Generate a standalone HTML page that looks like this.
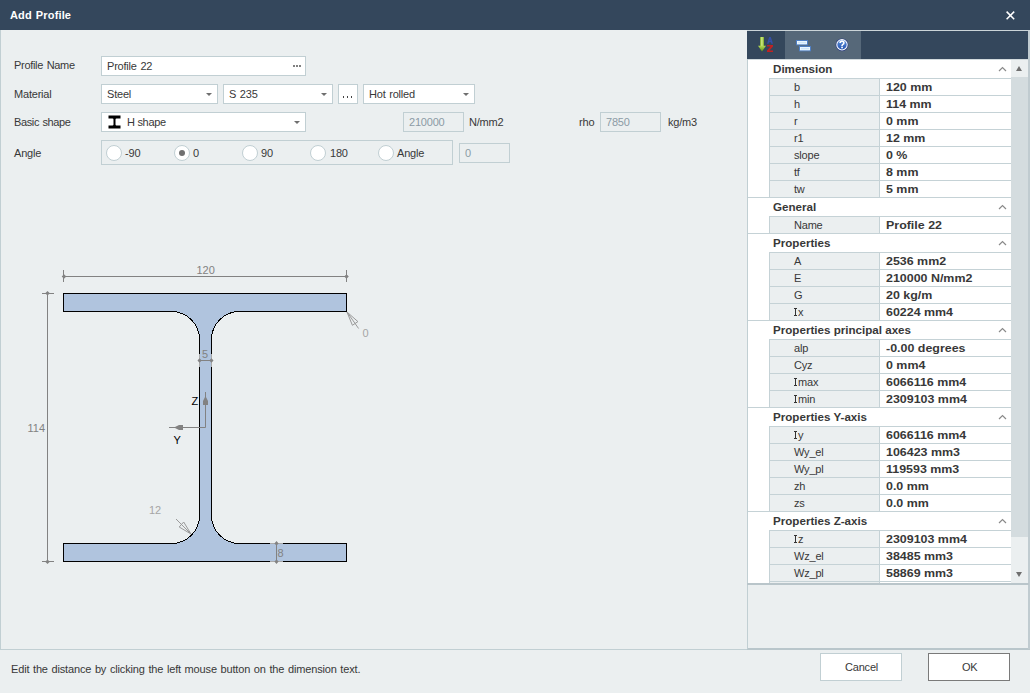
<!DOCTYPE html>
<html><head><meta charset="utf-8">
<style>
*{margin:0;padding:0;box-sizing:border-box}
html,body{width:1030px;height:693px;overflow:hidden;background:#EBEFF0;font-family:"Liberation Sans",sans-serif;font-size:11px;color:#383838;position:relative}
.a{position:absolute}
.t{position:absolute;white-space:nowrap;line-height:13px;letter-spacing:-0.2px;word-spacing:0.8px}
.box{position:absolute;background:#fff;border:1px solid #C1CFD3}
.dis{background:#EBEFF0}
.arr{position:absolute;width:0;height:0;border-left:3.5px solid transparent;border-right:3.5px solid transparent;border-top:3.5px solid #6f6f6f}
.hdr{font-weight:bold;letter-spacing:0;word-spacing:0;transform:scaleX(1.055);transform-origin:0 0}
.val{font-weight:bold;letter-spacing:0;word-spacing:0;transform:scaleX(1.13);transform-origin:0 0}
.I{display:inline-block;width:3px;height:8px;border-top:1px solid #333;border-bottom:1px solid #333;background:linear-gradient(#333,#333) no-repeat 1px 0/1px 100%;margin-right:1px;vertical-align:baseline}
.radio{position:absolute;width:16px;height:16px;border-radius:50%;background:#fff;border:1px solid #C1CFD3}
</style></head><body>
<!-- title bar -->
<div class="a" style="left:0;top:0;width:1030px;height:30px;background:#34475C"></div>
<div class="t" style="left:10px;top:9px;color:#fff;font-weight:bold;letter-spacing:0.15px">Add Profile</div>
<svg class="a" style="left:1004px;top:9px" width="12" height="12" viewBox="0 0 12 12"><path d="M2.6 2.6L10.2 10.2M10.2 2.6L2.6 10.2" stroke="#fff" stroke-width="1.5"/></svg>

<!-- left panel border -->
<div class="a" style="left:0;top:30px;width:1px;height:620px;background:#C1CFD3"></div>
<div class="a" style="left:0;top:649px;width:747px;height:1px;background:#C1CFD3"></div>
<div class="a" style="left:747px;top:648px;width:283px;height:2px;background:#B9C6CB"></div>

<!-- form labels -->
<div class="t" style="left:14px;top:59px;letter-spacing:-0.3px">Profile Name</div>
<div class="t" style="left:14px;top:88px">Material</div>
<div class="t" style="left:14px;top:116px;letter-spacing:-0.38px">Basic shape</div>
<div class="t" style="left:14px;top:147px">Angle</div>

<!-- profile name -->
<div class="box" style="left:101px;top:56px;width:205px;height:20px"></div>
<div class="t" style="left:107px;top:60px">Profile 22</div>
<div class="a" style="left:293px;top:65px;width:2px;height:2px;background:#808080"></div>
<div class="a" style="left:296px;top:65px;width:2px;height:2px;background:#808080"></div>
<div class="a" style="left:299px;top:65px;width:2px;height:2px;background:#808080"></div>

<!-- material -->
<div class="box" style="left:101px;top:84px;width:117px;height:20px"></div>
<div class="t" style="left:107px;top:88px">Steel</div>
<div class="arr" style="left:206px;top:93px"></div>
<div class="box" style="left:223px;top:84px;width:110px;height:20px"></div>
<div class="t" style="left:229px;top:88px">S 235</div>
<div class="arr" style="left:321px;top:93px"></div>
<div class="box" style="left:338px;top:84px;width:20px;height:20px"></div>
<div class="a" style="left:343px;top:96px;width:1px;height:2px;background:#444"></div>
<div class="a" style="left:347px;top:96px;width:1px;height:2px;background:#444"></div>
<div class="a" style="left:351px;top:96px;width:1px;height:2px;background:#444"></div>
<div class="box" style="left:363px;top:84px;width:112px;height:20px"></div>
<div class="t" style="left:369px;top:88px">Hot rolled</div>
<div class="arr" style="left:463px;top:93px"></div>

<!-- basic shape -->
<div class="box" style="left:101px;top:112px;width:205px;height:20px"></div>
<svg class="a" style="left:108px;top:115px" width="13" height="14" viewBox="0 0 13 14"><path d="M0.5 0.5H12.5V3.5H8.5Q7.5 3.5 7.5 4.5V9.5Q7.5 10.5 8.5 10.5H12.5V13.5H0.5V10.5H4.5Q5.5 10.5 5.5 9.5V4.5Q5.5 3.5 4.5 3.5H0.5Z" fill="#000"/></svg>
<div class="t" style="left:127px;top:116px;letter-spacing:-0.3px;word-spacing:0">H shape</div>
<div class="arr" style="left:294px;top:121px"></div>

<!-- E / rho -->
<div class="box dis" style="left:403px;top:112px;width:61px;height:20px"></div>
<div class="t" style="left:409px;top:116px;color:#8C9BA5">210000</div>
<div class="t" style="left:469px;top:116px">N/mm2</div>
<div class="t" style="left:579px;top:116px">rho</div>
<div class="box dis" style="left:600px;top:112px;width:61px;height:20px"></div>
<div class="t" style="left:606px;top:116px;color:#8C9BA5">7850</div>
<div class="t" style="left:668px;top:116px">kg/m3</div>

<!-- angle group -->
<div class="a" style="left:101px;top:140px;width:352px;height:25px;border:1px solid #C1CFD3"></div>
<div class="radio" style="left:106px;top:145px"></div>
<div class="t" style="left:125px;top:147px">-90</div>
<div class="radio" style="left:174px;top:145px"></div>
<div class="a" style="left:179px;top:150px;width:6px;height:6px;border-radius:50%;background:#707070"></div>
<div class="t" style="left:193px;top:147px">0</div>
<div class="radio" style="left:242px;top:145px"></div>
<div class="t" style="left:261px;top:147px">90</div>
<div class="radio" style="left:310px;top:145px"></div>
<div class="t" style="left:330px;top:147px">180</div>
<div class="radio" style="left:378px;top:145px"></div>
<div class="t" style="left:397px;top:147px">Angle</div>
<div class="box dis" style="left:459px;top:143px;width:51px;height:20px"></div>
<div class="t" style="left:465px;top:147px;color:#8C9BA5">0</div>

<!-- DRAWING -->
<svg class="a" style="left:0;top:0" width="745" height="648" viewBox="0 0 745 648">
<path d="M63.5,293.5 H346.5 V311.5 H239.5 A28,28 0 0 0 211.5,339.5 V515.5 A28,28 0 0 0 239.5,543.5 H346.5 V561.5 H63.5 V543.5 H171.5 A28,28 0 0 0 199.5,515.5 V339.5 A28,28 0 0 0 171.5,311.5 H63.5 Z" fill="#B0C4DE" stroke="#000" stroke-width="1" shape-rendering="crispEdges"/>
<path d="M63.5,276.5H346.5 M63.5,270V282 M346.5,270V282 M47.5,293.5V561.5 M42,293.5H54 M42,561.5H54" stroke="#828282" stroke-width="1" fill="none"/>
<path d="M61.7,276.5L64,274.2L66.3,276.5L64,278.8Z M344.2,276.5L346.5,274.2L348.8,276.5L346.5,278.8Z M45.2,293.2L47.5,290.9L49.8,293.2L47.5,295.5Z M45.2,561.8L47.5,559.5L49.8,561.8L47.5,564.0999999999999Z" fill="#828282"/>
<text x="196.5" y="274" font-family="Liberation Sans" font-size="11" fill="#828282">120</text>
<text x="27.5" y="432" font-family="Liberation Sans" font-size="11" fill="#828282">114</text>
<path d="M199.5,360.5H211.5" stroke="#828282" stroke-width="1"/>
<path d="M199.5,354V367 M211.5,354V367" stroke="#A9A9A9" stroke-width="1"/>
<path d="M197.5,360.5L199.5,358.3L201.7,360.5L199.5,362.7Z M213.5,360.5L211.5,358.3L209.3,360.5L211.5,362.7Z" fill="#828282"/>
<text x="202" y="358" font-family="Liberation Sans" font-size="11" fill="#828282">5</text>
<path d="M276.5,543.5V561.5" stroke="#828282" stroke-width="1"/>
<path d="M270,543.5H283 M270,561.5H283" stroke="#A9A9A9" stroke-width="1"/>
<path d="M276.5,541L278.6,543.6L276.5,545.6L274.4,543.6Z M276.5,564L278.6,561.4L276.5,559.4L274.4,561.4Z" fill="#828282"/>
<text x="277.5" y="557" font-family="Liberation Sans" font-size="11" fill="#828282">8</text>
<path d="M176,519L191,534" stroke="#9a9a9a" stroke-width="1"/>
<path d="M191,534L179.2,527L183.7,522Z" fill="none" stroke="#9a9a9a" stroke-width="1"/>
<text x="149" y="514" font-family="Liberation Sans" font-size="11" fill="#A5A5A5">12</text>
<path d="M347,312L358.6,328.5" stroke="#9a9a9a" stroke-width="1"/>
<path d="M347,312L357.9,321.6L352.4,325.3Z" fill="none" stroke="#9a9a9a" stroke-width="1"/>
<text x="362.5" y="337" font-family="Liberation Sans" font-size="11" fill="#A5A5A5">0</text>
<path d="M205.5,392V427.5H169" stroke="#828282" stroke-width="1" fill="none"/>
<path d="M205.5,396L208,401V405H203V401Z M174,427.5L179,425H183V430H179Z" fill="#828282"/>
<text x="191.5" y="405" font-family="Liberation Sans" font-size="11" fill="#000">Z</text>
<text x="173.5" y="444" font-family="Liberation Sans" font-size="11" fill="#000">Y</text>
</svg>

<!-- RIGHT PANEL -->
<div class="a" style="left:747px;top:31px;width:1px;height:618px;background:#C1CFD3"></div>
<div class="a" style="left:747px;top:31px;width:282px;height:28px;background:#34475C"></div>
<div class="a" style="left:785px;top:31px;width:76px;height:28px;background:#566879"></div>
<div class="a" style="left:748px;top:59px;width:263px;height:524px;background:#fff"></div>
<div class="t hdr" style="left:773px;top:63px">Dimension</div>
<svg class="a" style="left:998px;top:66px" width="9" height="6" viewBox="0 0 9 6"><path d="M1 5L4.5 1.5L8 5" fill="none" stroke="#8a8a8a" stroke-width="1.2"/></svg>
<div class="a" style="left:769px;top:78px;width:242px;height:1px;background:#C5D2D6"></div>
<div class="a" style="left:769px;top:79px;width:1px;height:16px;background:#C5D2D6"></div>
<div class="a" style="left:770px;top:79px;width:109px;height:16px;background:#EBEFF0"></div>
<div class="a" style="left:879px;top:79px;width:1px;height:16px;background:#C5D2D6"></div>
<div class="t" style="left:794px;top:81px">b</div>
<div class="t val" style="left:886px;top:81px">120 mm</div>
<div class="a" style="left:769px;top:95px;width:242px;height:1px;background:#C5D2D6"></div>
<div class="a" style="left:769px;top:96px;width:1px;height:16px;background:#C5D2D6"></div>
<div class="a" style="left:770px;top:96px;width:109px;height:16px;background:#EBEFF0"></div>
<div class="a" style="left:879px;top:96px;width:1px;height:16px;background:#C5D2D6"></div>
<div class="t" style="left:794px;top:98px">h</div>
<div class="t val" style="left:886px;top:98px">114 mm</div>
<div class="a" style="left:769px;top:112px;width:242px;height:1px;background:#C5D2D6"></div>
<div class="a" style="left:769px;top:113px;width:1px;height:16px;background:#C5D2D6"></div>
<div class="a" style="left:770px;top:113px;width:109px;height:16px;background:#EBEFF0"></div>
<div class="a" style="left:879px;top:113px;width:1px;height:16px;background:#C5D2D6"></div>
<div class="t" style="left:794px;top:115px">r</div>
<div class="t val" style="left:886px;top:115px">0 mm</div>
<div class="a" style="left:769px;top:129px;width:242px;height:1px;background:#C5D2D6"></div>
<div class="a" style="left:769px;top:130px;width:1px;height:16px;background:#C5D2D6"></div>
<div class="a" style="left:770px;top:130px;width:109px;height:16px;background:#EBEFF0"></div>
<div class="a" style="left:879px;top:130px;width:1px;height:16px;background:#C5D2D6"></div>
<div class="t" style="left:794px;top:132px">r1</div>
<div class="t val" style="left:886px;top:132px">12 mm</div>
<div class="a" style="left:769px;top:146px;width:242px;height:1px;background:#C5D2D6"></div>
<div class="a" style="left:769px;top:147px;width:1px;height:16px;background:#C5D2D6"></div>
<div class="a" style="left:770px;top:147px;width:109px;height:16px;background:#EBEFF0"></div>
<div class="a" style="left:879px;top:147px;width:1px;height:16px;background:#C5D2D6"></div>
<div class="t" style="left:794px;top:149px">slope</div>
<div class="t val" style="left:886px;top:149px">0 %</div>
<div class="a" style="left:769px;top:163px;width:242px;height:1px;background:#C5D2D6"></div>
<div class="a" style="left:769px;top:164px;width:1px;height:16px;background:#C5D2D6"></div>
<div class="a" style="left:770px;top:164px;width:109px;height:16px;background:#EBEFF0"></div>
<div class="a" style="left:879px;top:164px;width:1px;height:16px;background:#C5D2D6"></div>
<div class="t" style="left:794px;top:166px">tf</div>
<div class="t val" style="left:886px;top:166px">8 mm</div>
<div class="a" style="left:769px;top:180px;width:242px;height:1px;background:#C5D2D6"></div>
<div class="a" style="left:769px;top:181px;width:1px;height:16px;background:#C5D2D6"></div>
<div class="a" style="left:770px;top:181px;width:109px;height:16px;background:#EBEFF0"></div>
<div class="a" style="left:879px;top:181px;width:1px;height:16px;background:#C5D2D6"></div>
<div class="t" style="left:794px;top:183px">tw</div>
<div class="t val" style="left:886px;top:183px">5 mm</div>
<div class="a" style="left:748px;top:197px;width:263px;height:1px;background:#C5D2D6"></div>
<div class="t hdr" style="left:773px;top:201px">General</div>
<svg class="a" style="left:998px;top:204px" width="9" height="6" viewBox="0 0 9 6"><path d="M1 5L4.5 1.5L8 5" fill="none" stroke="#8a8a8a" stroke-width="1.2"/></svg>
<div class="a" style="left:769px;top:216px;width:242px;height:1px;background:#C5D2D6"></div>
<div class="a" style="left:769px;top:217px;width:1px;height:16px;background:#C5D2D6"></div>
<div class="a" style="left:770px;top:217px;width:109px;height:16px;background:#EBEFF0"></div>
<div class="a" style="left:879px;top:217px;width:1px;height:16px;background:#C5D2D6"></div>
<div class="t" style="left:794px;top:219px">Name</div>
<div class="t val" style="left:886px;top:219px">Profile 22</div>
<div class="a" style="left:748px;top:233px;width:263px;height:1px;background:#C5D2D6"></div>
<div class="t hdr" style="left:773px;top:237px">Properties</div>
<svg class="a" style="left:998px;top:240px" width="9" height="6" viewBox="0 0 9 6"><path d="M1 5L4.5 1.5L8 5" fill="none" stroke="#8a8a8a" stroke-width="1.2"/></svg>
<div class="a" style="left:769px;top:252px;width:242px;height:1px;background:#C5D2D6"></div>
<div class="a" style="left:769px;top:253px;width:1px;height:16px;background:#C5D2D6"></div>
<div class="a" style="left:770px;top:253px;width:109px;height:16px;background:#EBEFF0"></div>
<div class="a" style="left:879px;top:253px;width:1px;height:16px;background:#C5D2D6"></div>
<div class="t" style="left:794px;top:255px">A</div>
<div class="t val" style="left:886px;top:255px">2536 mm2</div>
<div class="a" style="left:769px;top:269px;width:242px;height:1px;background:#C5D2D6"></div>
<div class="a" style="left:769px;top:270px;width:1px;height:16px;background:#C5D2D6"></div>
<div class="a" style="left:770px;top:270px;width:109px;height:16px;background:#EBEFF0"></div>
<div class="a" style="left:879px;top:270px;width:1px;height:16px;background:#C5D2D6"></div>
<div class="t" style="left:794px;top:272px">E</div>
<div class="t val" style="left:886px;top:272px">210000 N/mm2</div>
<div class="a" style="left:769px;top:286px;width:242px;height:1px;background:#C5D2D6"></div>
<div class="a" style="left:769px;top:287px;width:1px;height:16px;background:#C5D2D6"></div>
<div class="a" style="left:770px;top:287px;width:109px;height:16px;background:#EBEFF0"></div>
<div class="a" style="left:879px;top:287px;width:1px;height:16px;background:#C5D2D6"></div>
<div class="t" style="left:794px;top:289px">G</div>
<div class="t val" style="left:886px;top:289px">20 kg/m</div>
<div class="a" style="left:769px;top:303px;width:242px;height:1px;background:#C5D2D6"></div>
<div class="a" style="left:769px;top:304px;width:1px;height:16px;background:#C5D2D6"></div>
<div class="a" style="left:770px;top:304px;width:109px;height:16px;background:#EBEFF0"></div>
<div class="a" style="left:879px;top:304px;width:1px;height:16px;background:#C5D2D6"></div>
<div class="t" style="left:794px;top:306px"><i class="I"></i>x</div>
<div class="t val" style="left:886px;top:306px">60224 mm4</div>
<div class="a" style="left:748px;top:320px;width:263px;height:1px;background:#C5D2D6"></div>
<div class="t hdr" style="left:773px;top:324px">Properties principal axes</div>
<svg class="a" style="left:998px;top:327px" width="9" height="6" viewBox="0 0 9 6"><path d="M1 5L4.5 1.5L8 5" fill="none" stroke="#8a8a8a" stroke-width="1.2"/></svg>
<div class="a" style="left:769px;top:339px;width:242px;height:1px;background:#C5D2D6"></div>
<div class="a" style="left:769px;top:340px;width:1px;height:16px;background:#C5D2D6"></div>
<div class="a" style="left:770px;top:340px;width:109px;height:16px;background:#EBEFF0"></div>
<div class="a" style="left:879px;top:340px;width:1px;height:16px;background:#C5D2D6"></div>
<div class="t" style="left:794px;top:342px">alp</div>
<div class="t val" style="left:886px;top:342px">-0.00 degrees</div>
<div class="a" style="left:769px;top:356px;width:242px;height:1px;background:#C5D2D6"></div>
<div class="a" style="left:769px;top:357px;width:1px;height:16px;background:#C5D2D6"></div>
<div class="a" style="left:770px;top:357px;width:109px;height:16px;background:#EBEFF0"></div>
<div class="a" style="left:879px;top:357px;width:1px;height:16px;background:#C5D2D6"></div>
<div class="t" style="left:794px;top:359px">Cyz</div>
<div class="t val" style="left:886px;top:359px">0 mm4</div>
<div class="a" style="left:769px;top:373px;width:242px;height:1px;background:#C5D2D6"></div>
<div class="a" style="left:769px;top:374px;width:1px;height:16px;background:#C5D2D6"></div>
<div class="a" style="left:770px;top:374px;width:109px;height:16px;background:#EBEFF0"></div>
<div class="a" style="left:879px;top:374px;width:1px;height:16px;background:#C5D2D6"></div>
<div class="t" style="left:794px;top:376px"><i class="I"></i>max</div>
<div class="t val" style="left:886px;top:376px">6066116 mm4</div>
<div class="a" style="left:769px;top:390px;width:242px;height:1px;background:#C5D2D6"></div>
<div class="a" style="left:769px;top:391px;width:1px;height:16px;background:#C5D2D6"></div>
<div class="a" style="left:770px;top:391px;width:109px;height:16px;background:#EBEFF0"></div>
<div class="a" style="left:879px;top:391px;width:1px;height:16px;background:#C5D2D6"></div>
<div class="t" style="left:794px;top:393px"><i class="I"></i>min</div>
<div class="t val" style="left:886px;top:393px">2309103 mm4</div>
<div class="a" style="left:748px;top:407px;width:263px;height:1px;background:#C5D2D6"></div>
<div class="t hdr" style="left:773px;top:411px">Properties Y-axis</div>
<svg class="a" style="left:998px;top:414px" width="9" height="6" viewBox="0 0 9 6"><path d="M1 5L4.5 1.5L8 5" fill="none" stroke="#8a8a8a" stroke-width="1.2"/></svg>
<div class="a" style="left:769px;top:426px;width:242px;height:1px;background:#C5D2D6"></div>
<div class="a" style="left:769px;top:427px;width:1px;height:16px;background:#C5D2D6"></div>
<div class="a" style="left:770px;top:427px;width:109px;height:16px;background:#EBEFF0"></div>
<div class="a" style="left:879px;top:427px;width:1px;height:16px;background:#C5D2D6"></div>
<div class="t" style="left:794px;top:429px"><i class="I"></i>y</div>
<div class="t val" style="left:886px;top:429px">6066116 mm4</div>
<div class="a" style="left:769px;top:443px;width:242px;height:1px;background:#C5D2D6"></div>
<div class="a" style="left:769px;top:444px;width:1px;height:16px;background:#C5D2D6"></div>
<div class="a" style="left:770px;top:444px;width:109px;height:16px;background:#EBEFF0"></div>
<div class="a" style="left:879px;top:444px;width:1px;height:16px;background:#C5D2D6"></div>
<div class="t" style="left:794px;top:446px">Wy_el</div>
<div class="t val" style="left:886px;top:446px">106423 mm3</div>
<div class="a" style="left:769px;top:460px;width:242px;height:1px;background:#C5D2D6"></div>
<div class="a" style="left:769px;top:461px;width:1px;height:16px;background:#C5D2D6"></div>
<div class="a" style="left:770px;top:461px;width:109px;height:16px;background:#EBEFF0"></div>
<div class="a" style="left:879px;top:461px;width:1px;height:16px;background:#C5D2D6"></div>
<div class="t" style="left:794px;top:463px">Wy_pl</div>
<div class="t val" style="left:886px;top:463px">119593 mm3</div>
<div class="a" style="left:769px;top:477px;width:242px;height:1px;background:#C5D2D6"></div>
<div class="a" style="left:769px;top:478px;width:1px;height:16px;background:#C5D2D6"></div>
<div class="a" style="left:770px;top:478px;width:109px;height:16px;background:#EBEFF0"></div>
<div class="a" style="left:879px;top:478px;width:1px;height:16px;background:#C5D2D6"></div>
<div class="t" style="left:794px;top:480px">zh</div>
<div class="t val" style="left:886px;top:480px">0.0 mm</div>
<div class="a" style="left:769px;top:494px;width:242px;height:1px;background:#C5D2D6"></div>
<div class="a" style="left:769px;top:495px;width:1px;height:16px;background:#C5D2D6"></div>
<div class="a" style="left:770px;top:495px;width:109px;height:16px;background:#EBEFF0"></div>
<div class="a" style="left:879px;top:495px;width:1px;height:16px;background:#C5D2D6"></div>
<div class="t" style="left:794px;top:497px">zs</div>
<div class="t val" style="left:886px;top:497px">0.0 mm</div>
<div class="a" style="left:748px;top:511px;width:263px;height:1px;background:#C5D2D6"></div>
<div class="t hdr" style="left:773px;top:515px">Properties Z-axis</div>
<svg class="a" style="left:998px;top:518px" width="9" height="6" viewBox="0 0 9 6"><path d="M1 5L4.5 1.5L8 5" fill="none" stroke="#8a8a8a" stroke-width="1.2"/></svg>
<div class="a" style="left:769px;top:530px;width:242px;height:1px;background:#C5D2D6"></div>
<div class="a" style="left:769px;top:531px;width:1px;height:16px;background:#C5D2D6"></div>
<div class="a" style="left:770px;top:531px;width:109px;height:16px;background:#EBEFF0"></div>
<div class="a" style="left:879px;top:531px;width:1px;height:16px;background:#C5D2D6"></div>
<div class="t" style="left:794px;top:533px"><i class="I"></i>z</div>
<div class="t val" style="left:886px;top:533px">2309103 mm4</div>
<div class="a" style="left:769px;top:547px;width:242px;height:1px;background:#C5D2D6"></div>
<div class="a" style="left:769px;top:548px;width:1px;height:16px;background:#C5D2D6"></div>
<div class="a" style="left:770px;top:548px;width:109px;height:16px;background:#EBEFF0"></div>
<div class="a" style="left:879px;top:548px;width:1px;height:16px;background:#C5D2D6"></div>
<div class="t" style="left:794px;top:550px">Wz_el</div>
<div class="t val" style="left:886px;top:550px">38485 mm3</div>
<div class="a" style="left:769px;top:564px;width:242px;height:1px;background:#C5D2D6"></div>
<div class="a" style="left:769px;top:565px;width:1px;height:16px;background:#C5D2D6"></div>
<div class="a" style="left:770px;top:565px;width:109px;height:16px;background:#EBEFF0"></div>
<div class="a" style="left:879px;top:565px;width:1px;height:16px;background:#C5D2D6"></div>
<div class="t" style="left:794px;top:567px">Wz_pl</div>
<div class="t val" style="left:886px;top:567px">58869 mm3</div>
<div class="a" style="left:769px;top:581px;width:242px;height:1px;background:#C5D2D6"></div>
<div class="a" style="left:769px;top:582px;width:1px;height:1px;background:#C5D2D6"></div>
<div class="a" style="left:770px;top:582px;width:109px;height:1px;background:#EBEFF0"></div>
<div class="a" style="left:879px;top:582px;width:1px;height:1px;background:#C5D2D6"></div>
<div class="a" style="left:1011px;top:59px;width:17px;height:524px;background:#EBEFF0"></div>
<div class="a" style="left:1011px;top:77px;width:17px;height:460px;background:#D4DCDF"></div>
<div class="a" style="left:1016px;top:66px;width:0;height:0;border-left:3.5px solid transparent;border-right:3.5px solid transparent;border-bottom:5px solid #6f6f6f"></div>
<div class="a" style="left:1016px;top:572px;width:0;height:0;border-left:3.5px solid transparent;border-right:3.5px solid transparent;border-top:5px solid #6f6f6f"></div>
<div class="a" style="left:1028px;top:30px;width:2px;height:619px;background:#C0CBD0"></div>
<div class="a" style="left:747px;top:30px;width:283px;height:1px;background:#CBD4D8"></div>
<div class="a" style="left:748px;top:59px;width:280px;height:1px;background:#D2DADD"></div>
<div class="a" style="left:747px;top:583px;width:282px;height:2px;background:#B9C5CA"></div>
<svg class="a" style="left:752px;top:33px" width="28" height="24" viewBox="0 0 28 24">
<defs><linearGradient id="ga" x1="0" x2="1"><stop offset="0" stop-color="#6E9E1E"/><stop offset="0.45" stop-color="#D6F08A"/><stop offset="1" stop-color="#79A823"/></linearGradient>
<linearGradient id="gb" x1="0" x2="0" y1="0" y2="1"><stop offset="0" stop-color="#B5DA55"/><stop offset="1" stop-color="#5E9015"/></linearGradient></defs>
<path d="M8,4H12V13H8Z" fill="url(#ga)"/>
<path d="M6,12.8H14L10,18.6Z" fill="url(#gb)"/>
<path d="M15,10.8L17.2,4H18.8L21,10.8H19.4L18.9,9.2H17.1L16.6,10.8ZM17.5,7.8H18.5L18,6.2Z" fill="#3550A8" fill-rule="evenodd"/>
<path d="M15,12H21V13.6L17.4,17.4H21V19H15V17.4L18.6,13.6H15Z" fill="#C02222"/>
</svg>
<svg class="a" style="left:790px;top:33px" width="65" height="24" viewBox="0 0 65 24">
<rect x="6.5" y="7.5" width="11" height="4.3" fill="#CFE6F8" stroke="#4F7FC4" stroke-width="1"/>
<rect x="7.5" y="8.5" width="9" height="2.3" fill="none" stroke="#F2FAFF" stroke-width="0.8"/>
<rect x="9.5" y="13.5" width="11" height="4.3" fill="#CFE6F8" stroke="#4F7FC4" stroke-width="1"/>
<rect x="10.5" y="14.5" width="9" height="2.3" fill="none" stroke="#F2FAFF" stroke-width="0.8"/>
<defs><linearGradient id="gh" x1="0" x2="0" y1="0" y2="1"><stop offset="0" stop-color="#5B8FDA"/><stop offset="1" stop-color="#2653B0"/></linearGradient></defs>
<circle cx="52" cy="11.8" r="6.4" fill="#2C3F80"/>
<circle cx="52" cy="11.8" r="5.7" fill="#fff"/>
<circle cx="52" cy="11.8" r="4.7" fill="url(#gh)"/>
<path d="M50.1,10.1Q50.1,8.1 52,8.1Q53.9,8.1 53.9,9.8Q53.9,10.9 52.9,11.4Q52,11.9 52,12.9" fill="none" stroke="#fff" stroke-width="1.6"/>
<rect x="51.2" y="13.7" width="1.7" height="1.6" fill="#fff"/>
</svg>

<!-- status -->
<div class="t" style="left:11px;top:663px;letter-spacing:-0.16px">Edit the distance by clicking the left mouse button on the dimension text.</div>
<div class="box" style="left:820px;top:653px;width:82px;height:28px"></div>
<div class="t" style="left:845px;top:661px">Cancel</div>
<div class="box" style="left:928px;top:653px;width:82px;height:28px;border-color:#7A7A7A"></div>
<div class="t" style="left:962px;top:661px">OK</div>
</body></html>
